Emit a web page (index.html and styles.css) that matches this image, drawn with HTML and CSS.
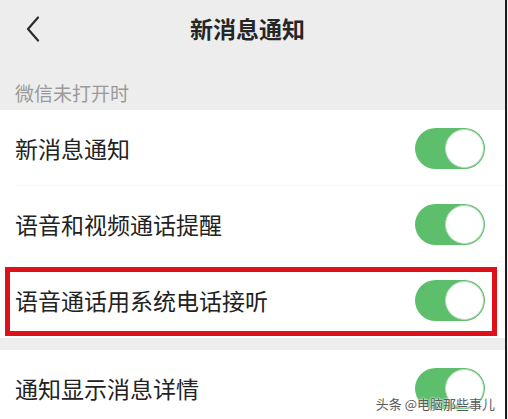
FILE: index.html
```html
<!DOCTYPE html>
<html lang="zh-CN">
<head>
    <meta charset="UTF-8">
    <meta name="viewport" content="width=device-width, initial-scale=1.0">
    <title>新消息通知</title>
    <link rel="stylesheet" href="styles.css">
</head>
<body>

<div class="page">
    <header class="topbar">
        <span class="back">
            <svg width="14" height="26" viewBox="0 0 14 26">
                <polyline points="12,1.5 2,13 12,24.5" fill="none" stroke="#2b2b2b" stroke-width="2.2" stroke-linecap="round" stroke-linejoin="round"/>
            </svg>
        </span>
        <h1 class="title">新消息通知</h1>
        <span></span>
    </header>

    <div class="section-label">微信未打开时</div>

    <div class="group">
        <div class="row">
            <span class="row-text">新消息通知</span>
            <span class="switch on"></span>
        </div>
        <div class="row">
            <span class="row-text">语音和视频通话提醒</span>
            <span class="switch on"></span>
        </div>
        <div class="row marked">
            <span class="row-text">语音通话用系统电话接听</span>
            <span class="switch on"></span>
        </div>
    </div>

    <div class="group">
        <div class="row">
            <span class="row-text">通知显示消息详情</span>
            <span class="switch on"></span>
        </div>
    </div>

    <div class="watermark">头条 @电脑那些事儿</div>
</div>

</body>
</html>
```

FILE: styles.css
```css
body {
    margin: 0;
    padding: 0;
    background-color: #ededed;
    font-family: "Noto Sans CJK SC", "Noto Sans", sans-serif;
}

.page {
    position: relative;
    width: 505px;
    height: 419px;
    overflow: hidden;
    background-color: #ededed;
    border-right: 2px solid #1c1c1c;
}

.topbar {
    height: 55px;
    display: grid;
    grid-template-columns: 40px 1fr 50px;
    align-items: center;
}

.back {
    display: flex;
    justify-content: flex-end;
    padding-top: 2px;
}

.title {
    margin: 0;
    text-align: center;
    font-size: 23px;
    font-weight: 700;
    color: #262626;
}

.section-label {
    height: 55px;
    box-sizing: border-box;
    display: flex;
    align-items: flex-end;
    padding: 0 0 4px 15px;
    font-size: 19px;
    line-height: 27px;
    color: #9a9a9a;
}

.group {
    background: #ffffff;
    margin-bottom: 12px;
}

.group:first-of-type {
    padding-bottom: 3px;
}

.row {
    position: relative;
    height: 76px;
    display: flex;
    align-items: center;
    justify-content: space-between;
    padding: 0 20px 0 15px;
}

.row + .row::before {
    content: "";
    position: absolute;
    top: -1px;
    left: 15px;
    right: 0;
    border-top: 1px solid #f7f7f7;
}

.row-text {
    font-size: 23px;
    color: #222222;
}

/* red annotation box */
.row.marked::after {
    content: "";
    position: absolute;
    top: 5px;
    left: 5px;
    right: 8px;
    bottom: 2px;
    border: 5px solid #e0101a;
}

.switch {
    position: relative;
    width: 70px;
    height: 41px;
    border-radius: 21px;
    background-color: #5dbf6c;
}

.switch::after {
    content: "";
    position: absolute;
    top: 1px;
    right: 1px;
    width: 37px;
    height: 37px;
    border-radius: 50%;
    background: #ffffff;
    border: 1px solid #b9dcbf;
}

.watermark {
    position: absolute;
    right: 10px;
    bottom: 6px;
    font-size: 13px;
    color: #5a5a5a;
    text-shadow: 0 0 2px #fff, 0 0 2px #fff;
}
```
